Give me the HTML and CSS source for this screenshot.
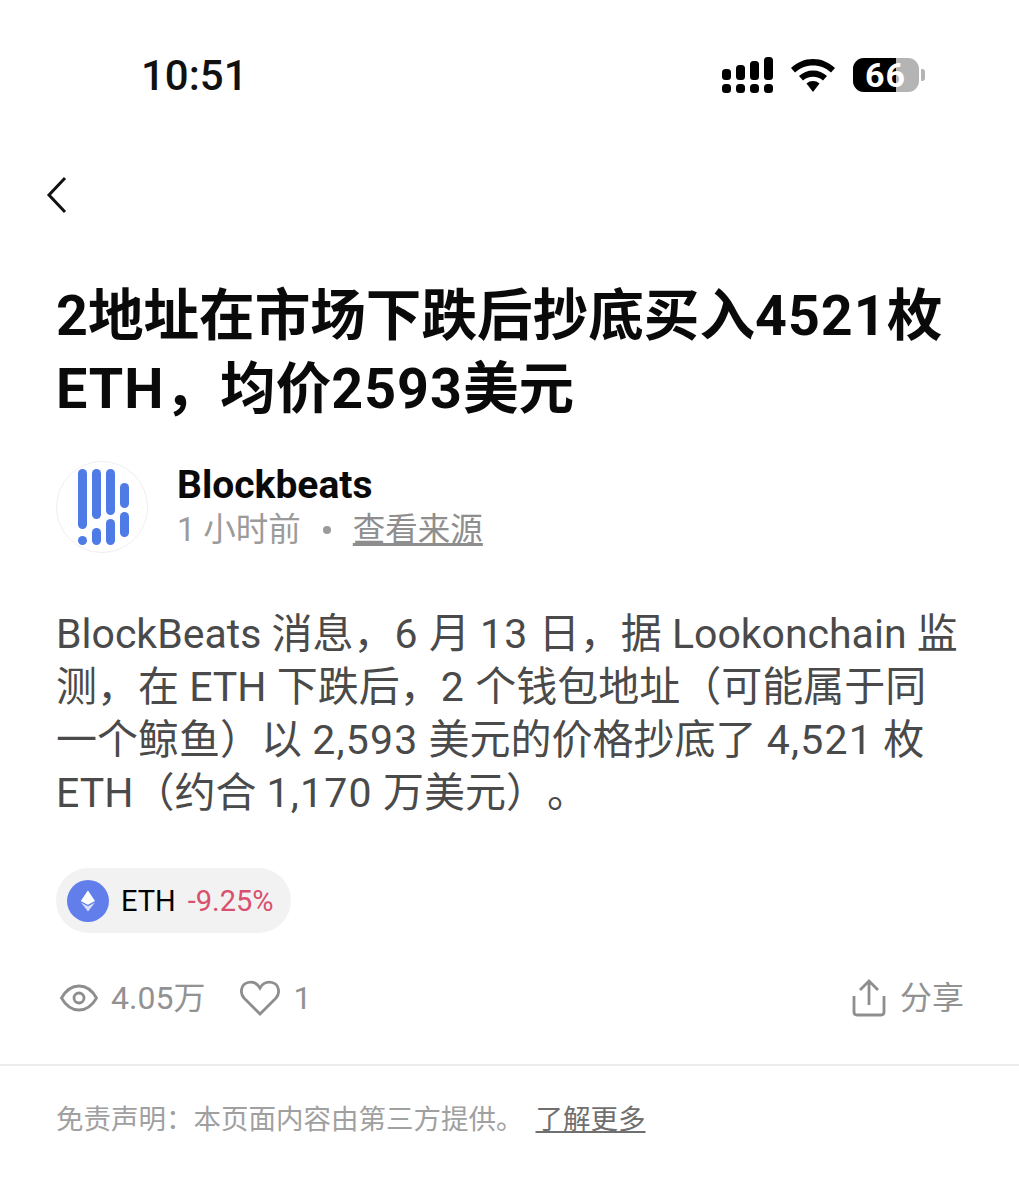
FILE: index.html
```html
<!DOCTYPE html>
<html>
<head>
    <title>Blockbeats</title>
<link rel="stylesheet" href="styles.css">
</head>
<body>
    <div class="status-bar">
        <span class="time">10:51</span>
        <div class="status-icons">
            <svg class="signal" width="51" height="36" viewBox="0 0 51 36">
                <rect x="0" y="12" width="9" height="11" rx="3.5"/><rect x="14" y="8" width="9" height="15" rx="3.5"/><rect x="28" y="4" width="9" height="19" rx="3.5"/><rect x="42" y="0" width="9" height="23" rx="3.5"/>
                <rect x="0" y="27" width="9" height="9" rx="3.5"/><rect x="14" y="27" width="9" height="9" rx="3.5"/><rect x="28" y="27" width="9" height="9" rx="3.5"/><rect x="42" y="27" width="9" height="9" rx="3.5"/>
            </svg>
            <svg class="wifi" width="44" height="33" viewBox="0 0 44 33">
                <path d="M22 0C13.5 0 6 3.400 0 9L4 13.500C9 9 15 6.500 22 6.500S35 9 40 13.500L44 9C38 3.400 30.500 0 22 0Z"/>
                <path d="M22 11.500C16.500 11.500 12 13.500 8 17L12 21.500C15 19 18 17.800 22 17.800S29 19 32 21.500L36 17C32 13.500 27.500 11.500 22 11.500Z"/>
                <path d="M22 22C19.500 22 17.500 22.800 15.500 24.500L22 33L28.500 24.500C26.500 22.800 24.500 22 22 22Z"/>
            </svg>
            <div class="battery">
                <div class="battery-body"><div class="battery-fill"></div><span class="battery-num">66</span></div>
                <div class="battery-tip"></div>
            </div>
        </div>
    </div>

    <div class="nav">
        <svg width="22" height="38" viewBox="0 0 22 38"><path d="M19 2L3 19L19 36" fill="none" stroke="#111" stroke-width="3"/></svg>
    </div>

    <div class="content">
        <h1>2地址在市场下跌后抄底买入<span class="title-num">4521</span>枚<br><span class="title-num">ETH</span>，均价<span class="title-num">2593</span>美元</h1>

        <div class="author">
            <div class="avatar">
                <svg width="92" height="92" viewBox="0 0 92 92">
                    <g fill="#4f7be6">
                        <rect x="22" y="8" width="9" height="60" rx="4.500"/>
                        <rect x="36" y="8" width="9" height="50" rx="4.500"/>
                        <rect x="50" y="8" width="9" height="46" rx="4.500"/>
                        <rect x="64" y="22" width="9" height="25" rx="4.500"/>
                        <rect x="64" y="51" width="9" height="25" rx="4.500"/>
                        <rect x="50" y="58" width="9" height="26" rx="4.500"/>
                        <rect x="36" y="67" width="9" height="17" rx="4.500"/>
                        <circle cx="26.500" cy="79.500" r="4.500"/>
                    </g>
                </svg>
            </div>
            <div class="author-info">
                <div class="author-name">Blockbeats</div>
                <div class="author-meta">
                    <span>1 小时前</span>
                    <span class="dot"></span>
                    <a href="#">查看来源</a>
                </div>
            </div>
        </div>

        <p class="article">BlockBeats 消息，<span class="num">6</span> 月 <span class="num">13</span> 日，据 Lookonchain 监<br>测，在 ETH 下跌后，<span class="num">2</span> 个钱包地址（可能属于同<br>一个鲸鱼）以 <span class="num">2,593</span> 美元的价格抄底了 <span class="num">4,521</span> 枚<br>ETH（约合 <span class="num">1,170</span> 万美元）。</p>

        <div class="coin-tag">
            <span class="coin-icon">
                <svg width="14" height="22" viewBox="0 0 20 30">
                    <path d="M10 0L20 15L10 20.500L0 15Z" fill="#fff"/>
                    <path d="M10 0L10 20.500L0 15Z" fill="#fff" opacity=".85"/>
                    <path d="M10 22.500L20 17L10 30L0 17Z" fill="#fff" opacity=".75"/>
                </svg>
            </span>
            <span class="coin-name">ETH</span>
            <span class="coin-change">-9.25%</span>
        </div>

        <div class="actions">
            <div class="action">
                <svg width="38" height="28" viewBox="0 0 38 28" fill="none" stroke="#8e8e8e" stroke-width="2.800"><path d="M1.500 14C6 6 12 2 19 2S32 6 36.500 14C32 22 26 26 19 26S6 22 1.500 14Z"/><circle cx="19" cy="14" r="5"/></svg>
                <span>4.05万</span>
            </div>
            <div class="action likes">
                <svg width="40" height="36" viewBox="0 0 40 36" fill="none" stroke="#8e8e8e" stroke-width="2.800"><path d="M20 34L4 18C-0.500 13 1 4 8 2.500C13 1.500 17.500 3.500 20 8C22.500 3.500 27 1.500 32 2.500C39 4 40.500 13 36 18Z"/></svg>
                <span>1</span>
            </div>
            <div class="action share">
                <svg width="34" height="38" viewBox="0 0 34 38" fill="none" stroke="#8e8e8e" stroke-width="2.800"><path d="M17 26V3M8 11L17 2L26 11"/><path d="M2 17V33C2 35 3 36 5 36H29C31 36 32 35 32 33V17"/></svg>
                <span>分享</span>
            </div>
        </div>
    </div>

    <div class="disclaimer">
        <span>免责声明：本页面内容由第三方提供。</span><a href="#">了解更多</a>
    </div>
</body>
</html>
```

FILE: styles.css
```css
* {
  box-sizing: border-box;
}

body {
  margin: 0;
  background: #ffffff;
  color: #000000;
  font-family: "Roboto", "Noto Sans CJK SC", sans-serif;
  text-spacing-trim: space-all;
}

.status-bar {
  height: 150px;
  padding: 54px 94px 0 141px;
  display: flex;
  justify-content: space-between;
  align-items: flex-start;
}

.time {
  font-size: 42px;
  line-height: 44px;
  font-weight: 500;
  color: #111;
}

.status-icons {
  display: flex;
  align-items: center;
  gap: 18px;
  padding-top: 3px;
}

.signal,
.wifi {
  fill: #000;
}

.battery {
  display: flex;
  align-items: center;
  gap: 2px;
}

.battery-body {
  width: 66px;
  height: 34px;
  border-radius: 11px;
  background: #b4b4b4;
  position: relative;
}

.battery-fill {
  width: 43px;
  height: 100%;
  background: #000;
  border-radius: 11px 0 0 11px;
}

.battery-num {
  position: absolute;
  left: 12px;
  top: 0;
  font-size: 34px;
  line-height: 34px;
  font-weight: 700;
  letter-spacing: 1px;
  color: #fff;
}

.battery-tip {
  width: 4px;
  height: 12px;
  background: #b4b4b4;
  border-radius: 0 3px 3px 0;
}

.nav {
  height: 130px;
  padding: 26px 0 0 46px;
}

.content {
  padding: 0 56px;
}

h1 {
  margin: 0;
  font-size: 55.600px;
  line-height: 73px;
  font-weight: 700;
  color: #0a0a0a;
}

.title-num {
  letter-spacing: 1px;
}

.author {
  display: flex;
  align-items: center;
  gap: 29px;
  margin-top: 35px;
}

.avatar {
  width: 92px;
  height: 92px;
  border: 1px solid #efefef;
  border-radius: 50%;
  overflow: hidden;
}

.avatar svg {
  display: block;
  margin: -1px;
}

.author-name {
  font-size: 39px;
  line-height: 46px;
  font-weight: 700;
  color: #0a0a0a;
}

.author-meta {
  display: flex;
  align-items: center;
  font-size: 32.500px;
  line-height: 44px;
  color: #9b9b9b;
}

.dot {
  width: 8px;
  height: 8px;
  border-radius: 50%;
  background: #9b9b9b;
  margin: 0 22px;
}

.author-meta a {
  color: #8e8e8e;
  text-decoration: underline;
}

.article {
  margin: 55px 0 0;
  font-size: 41px;
  line-height: 53px;
  color: #4a4a4a;
}

.num {
  letter-spacing: 1.200px;
}

.coin-tag {
  display: inline-flex;
  align-items: center;
  height: 65px;
  margin-top: 48px;
  padding: 0 17px 0 11px;
  background: #f2f2f2;
  border-radius: 33px;
  font-size: 29px;
}

.coin-icon {
  width: 42px;
  height: 42px;
  border-radius: 50%;
  background: #627eea;
  display: flex;
  align-items: center;
  justify-content: center;
  margin-right: 12px;
}

.coin-change {
  color: #d9506f;
  margin-left: 12px;
}

.actions {
  display: flex;
  align-items: center;
  margin-top: 43px;
  margin-right: -1px;
  font-size: 32px;
  line-height: 44px;
  color: #929292;
}

.action {
  display: flex;
  align-items: center;
  gap: 13px;
}

.action:first-child {
  padding-left: 4px;
}

.likes {
  margin-left: 35px;
}

.share {
  margin-left: auto;
  gap: 14px;
}

.disclaimer {
  margin-top: 44px;
  border-top: 2px solid #ececec;
  padding: 32px 56px 0;
  font-size: 27.500px;
  line-height: 44px;
  color: #a0a0a0;
}

.disclaimer a {
  color: #6f6f6f;
  margin-left: 12px;
  text-decoration: underline;
}
```
